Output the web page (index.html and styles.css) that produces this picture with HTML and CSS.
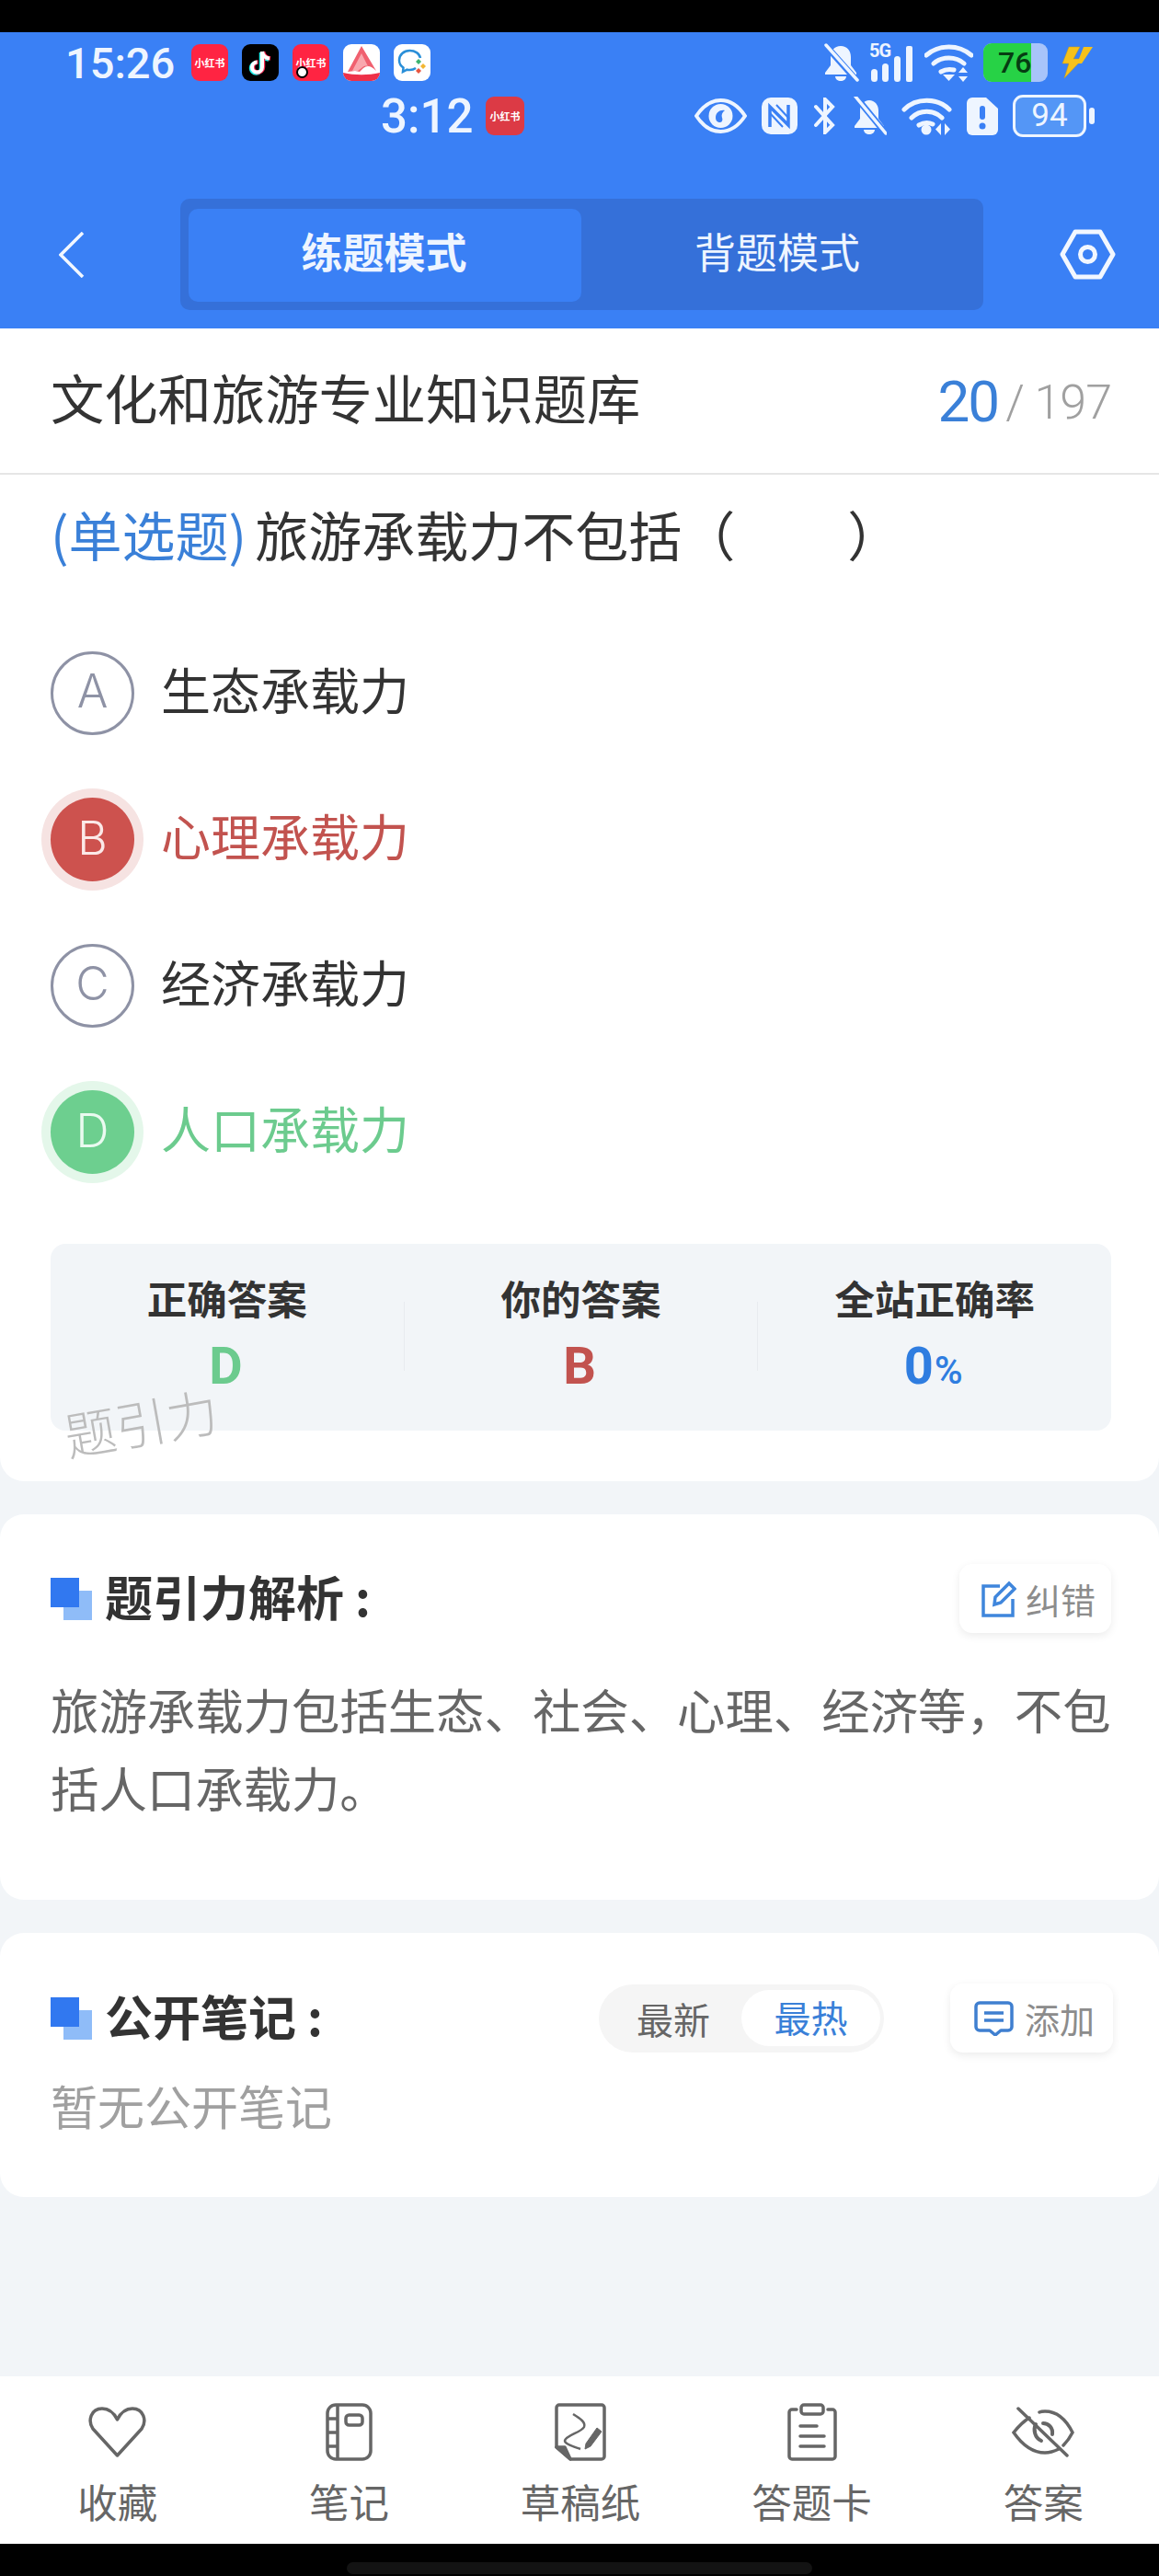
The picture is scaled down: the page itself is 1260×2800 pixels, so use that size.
FILE: index.html
```html
<!DOCTYPE html>
<html lang="zh-CN">
<head>
<meta charset="UTF-8" />
<title>文化和旅游专业知识题库</title>
<link rel="stylesheet" href="styles.css">
</head>
<body>
  <div class="page">
    <div class="black-top"></div>

    <header class="header">
      <div class="status-row status-one">
        <span class="time time-one">15:26</span>
        <div class="app-icons">
          <span class="app app-red">小红书</span>
          <span class="app app-black">
            <svg viewBox="0 0 40 40" width="40" height="40">
              <path d="M22 8v17a5.5 5.5 0 1 1-5.5-5.5M22 8c.5 4 3.500 7 8 7.500" fill="none" stroke="#25f4ee" stroke-width="4.500" transform="translate(-1 1)"/>
              <path d="M22 8v17a5.5 5.5 0 1 1-5.5-5.5M22 8c.5 4 3.500 7 8 7.500" fill="none" stroke="#fe2c55" stroke-width="4.500" transform="translate(1 0)"/>
              <path d="M22 8v17a5.5 5.5 0 1 1-5.5-5.5M22 8c.5 4 3.500 7 8 7.500" fill="none" stroke="#fff" stroke-width="4"/>
            </svg>
          </span>
          <span class="app app-red app-dot">小红书</span>
          <span class="app app-white">
            <svg viewBox="0 0 40 40" width="40" height="40">
              <path d="M20 2 36 29c-6-6-10-6-14-3l-4 4-5-1-8 1z" fill="#f0606f"/>
              <path d="M20 10 27 24c-3-1-5 0-7 2l-4 3-6 0z" fill="#f9a7ae"/>
              <path d="M0 31c13 3 27 3 40 0v9H0z" fill="#ee3048"/>
            </svg>
          </span>
          <span class="app app-white">
            <svg viewBox="0 0 40 40" width="40" height="40">
              <path d="M24 26c-2 1.500-4 2-6.500 2-1 0-2 0-3-.3L10 30l.5-4.500C7.500 23.500 6 20.500 6 17.500 6 11.500 11 7 17.500 7 23 7 28 10 29 15" fill="none" stroke="#2a8fd8" stroke-width="2.500"/>
              <path d="m27 16 3 3-3 3-3-3z" fill="#3cb371"/>
              <path d="m32 21 3 3-3 3-3-3z" fill="#f2b632"/>
              <path d="m27 26 3 3-3 3-3-3z" fill="#e8553f"/>
            </svg>
          </span>
        </div>
        <div class="sys-icons sys-one">
          <svg viewBox="0 0 40 42" width="40" height="42">
            <path d="M20 3c7 0 11 5 11 12v9l6 8v2H3v-2l6-8v-9C9 8 13 3 20 3zM14 36h12c0 3-3 5-6 5s-6-2-6-5z" fill="#eef5ff"/>
            <path d="M5 4 37 40" stroke="#3a80f5" stroke-width="7"/>
            <path d="M4 2 38 40" stroke="#eef5ff" stroke-width="3.500" stroke-linecap="round"/>
          </svg>
          <span class="signal">
            <span class="five-g">5G</span>
            <svg viewBox="0 0 49 42" width="49" height="42">
              <rect x="2" y="28" width="7" height="14" rx="3.500" fill="#eef5ff"/>
              <rect x="14" y="22" width="7" height="20" rx="3.500" fill="#eef5ff"/>
              <rect x="27" y="14" width="7" height="28" rx="3.500" fill="#eef5ff"/>
              <rect x="40" y="3" width="7" height="39" rx="2" fill="#eef5ff"/>
            </svg>
          </span>
          <svg viewBox="0 0 53 42" width="53" height="42" fill="none" stroke="#eef5ff" stroke-width="5" stroke-linecap="round">
            <path d="M2 13C16 1 37 1 51 13"/>
            <path d="M10 22c9-8 24-8 33 0"/>
            <path d="M18 31c5-3 10-3 14-2"/>
            <path d="M20 34h13l-6.500 7z" fill="#eef5ff" stroke="none"/>
            <path d="m42 26 5 6H37zM42 42l5-6H37z" fill="#eef5ff" stroke="none"/>
          </svg>
          <span class="batt-green">
            <span class="batt-green-fill">76</span>
          </span>
          <svg viewBox="0 0 35 36" width="35" height="36">
            <path d="M8 1h12L13 14h10L3 35l5-16H1z" fill="#f7c11a" stroke="#c99a10" stroke-width=".5"/>
            <path d="M24 1h10L22 19h-5z" fill="#f7c11a"/>
          </svg>
        </div>
      </div>

      <div class="status-row status-two">
        <span class="time time-two">3:12</span>
        <span class="app app-dim">小红书</span>
        <div class="sys-icons sys-two">
          <svg viewBox="0 0 57 38" width="57" height="38">
            <path d="M2 19C10 7 19 2 28.500 2S47 7 55 19C47 31 38 36 28.500 36S10 31 2 19z" fill="none" stroke="#eef5ff" stroke-width="4"/>
            <circle cx="28.500" cy="19" r="13" fill="#eef5ff"/>
            <path d="M23 21c0-6 5-9 10-8-3 2-4 5-3 8 1 2 0 5-2 5-3 0-5-2-5-5z" fill="#3a80f5"/>
          </svg>
          <svg viewBox="0 0 39 40" width="39" height="40">
            <rect x="0" y="0" width="39" height="40" rx="10" fill="#eef5ff"/>
            <path d="M9 32V10l20 20V8" fill="none" stroke="#3a80f5" stroke-width="3.500"/>
            <path d="M16 8l14 15M9 17l14 15" stroke="#3a80f5" stroke-width="2"/>
          </svg>
          <svg viewBox="0 0 27 40" width="27" height="40" fill="none" stroke="#eef5ff" stroke-width="4" stroke-linecap="round">
            <path d="M4 10 22 30l-8 8V2l8 8L4 30"/>
          </svg>
          <svg viewBox="0 0 38 42" width="38" height="42">
            <path d="M19 4c6 0 10 5 10 11v9l6 8v2H3v-2l6-8v-9C9 9 13 4 19 4zM13 36h12c0 3-3 5-6 5s-6-2-6-5z" fill="#eef5ff"/>
            <path d="M5 1 37 40" stroke="#3a80f5" stroke-width="7"/>
            <path d="M4 0 37 40" stroke="#eef5ff" stroke-width="3.500" stroke-linecap="round"/>
          </svg>
          <svg viewBox="0 0 55 42" width="55" height="42" fill="none" stroke="#eef5ff" stroke-width="5" stroke-linecap="round">
            <path d="M3 14C16 1 39 1 52 14"/>
            <path d="M11 23c9-9 24-9 33 0"/>
            <path d="M19 31c5-3 11-3 15-1"/>
            <circle cx="27" cy="36" r="5.500" fill="#eef5ff" stroke="none"/>
            <path d="M43 29v13l-6-6.500zM47 29v13l6-6.500z" fill="#eef5ff" stroke="none"/>
          </svg>
          <svg viewBox="0 0 34 41" width="34" height="41">
            <path d="M6 0h15l13 12v23a6 6 0 0 1-6 6H6a6 6 0 0 1-6-6V6a6 6 0 0 1 6-6z" fill="#eef5ff"/>
            <rect x="14" y="9" width="6" height="15" rx="3" fill="#3a80f5"/>
            <circle cx="17" cy="31" r="3.500" fill="#3a80f5"/>
          </svg>
          <span class="batt-outline"><b>94</b></span>
          <span class="batt-nub"></span>
        </div>
      </div>

      <div class="nav-row">
        <svg class="back" viewBox="0 0 28 50" width="28" height="50" fill="none" stroke="#f2f7ff" stroke-width="3.500">
          <path d="M26 1 2 25l24 24"/>
        </svg>
        <div class="mode-tabs">
          <span class="mode-tab mode-active">练题模式</span>
          <span class="mode-tab">背题模式</span>
        </div>
        <svg class="gear" viewBox="0 0 61 55" width="61" height="55" fill="none" stroke="#f2f7ff" stroke-width="5" stroke-linejoin="round">
          <path d="M17 3h27l14 24.500L44 52H17L3 27.500z"/>
          <circle cx="30.500" cy="27.500" r="8"/>
        </svg>
      </div>
    </header>

    <main class="main">
      <section class="panel">
        <div class="title-row">
          <div class="title">文化和旅游专业知识题库</div>
          <div class="count"><span class="count-now">20</span><span class="count-all">/ 197</span></div>
        </div>

        <div class="question"><span class="q-type">(单选题)</span>旅游承载力不包括（<span class="q-gap"></span>）</div>

        <ul class="options">
          <li class="option"><span class="bullet">A</span><span class="opt-text">生态承载力</span></li>
          <li class="option option-wrong"><span class="bullet">B</span><span class="opt-text">心理承载力</span></li>
          <li class="option"><span class="bullet">C</span><span class="opt-text">经济承载力</span></li>
          <li class="option option-right"><span class="bullet">D</span><span class="opt-text">人口承载力</span></li>
        </ul>

        <div class="stats">
          <div class="stat">
            <div class="stat-label">正确答案</div>
            <div class="stat-value val-green">D</div>
          </div>
          <i class="stat-line"></i>
          <div class="stat">
            <div class="stat-label">你的答案</div>
            <div class="stat-value val-red">B</div>
          </div>
          <i class="stat-line"></i>
          <div class="stat">
            <div class="stat-label">全站正确率</div>
            <div class="stat-value val-blue">0<small>%</small></div>
          </div>
        </div>
        <div class="watermark">题引力</div>
      </section>

      <section class="card card-analysis">
        <div class="card-head">
          <svg class="head-mark" viewBox="0 0 45 46" width="45" height="46">
            <rect x="14" y="14" width="31" height="32" fill="#8fbcf8"/>
            <rect x="0" y="0" width="31" height="32" fill="#3178f0"/>
          </svg>
          <h2 class="head-title">题引力解析<span class="colon">:</span></h2>
          <span class="mini-btn btn-fix">
            <svg viewBox="0 0 38 40" width="38" height="40" fill="none" stroke="#3f86dc" stroke-width="3.500">
              <path d="M20 6H2v32h32V20"/>
              <path d="M14 26l1-8L30 3l6 6-15 15z"/>
            </svg>
            纠错
          </span>
        </div>
        <p class="analysis-text">旅游承载力包括生态、社会、心理、经济等，不包括人口承载力。</p>
      </section>

      <section class="card card-notes">
        <div class="card-head">
          <svg class="head-mark" viewBox="0 0 45 46" width="45" height="46">
            <rect x="14" y="14" width="31" height="32" fill="#8fbcf8"/>
            <rect x="0" y="0" width="31" height="32" fill="#3178f0"/>
          </svg>
          <h2 class="head-title">公开笔记<span class="colon">:</span></h2>
          <div class="sort-tabs">
            <span class="sort-tab">最新</span>
            <span class="sort-tab sort-active">最热</span>
          </div>
          <span class="mini-btn btn-add">
            <svg viewBox="0 0 43 38" width="43" height="38" fill="none" stroke="#3f7fd0" stroke-width="3.500" stroke-linejoin="round">
              <path d="M6 2h31a4 4 0 0 1 4 4v22a4 4 0 0 1-4 4h-8l-6 5-6-5H6a4 4 0 0 1-4-4V6a4 4 0 0 1 4-4z"/>
              <path d="M11 13h21M11 21h21"/>
            </svg>
            添加
          </span>
        </div>
        <p class="notes-empty">暂无公开笔记</p>
      </section>
    </main>

    <nav class="bottom-bar">
      <div class="bar-item">
        <span class="bar-icon">
          <svg viewBox="0 0 63 55" width="63" height="55" fill="none" stroke="#666" stroke-width="3.500" stroke-linejoin="round">
            <path d="M31.500 53 5 24C-1 15 3 2 15 2c8 0 13 5 16.500 12C35 7 40 2 48 2c12 0 16 13 10 22z"/>
          </svg>
        </span>
        <span class="bar-label">收藏</span>
      </div>
      <div class="bar-item">
        <span class="bar-icon">
          <svg viewBox="0 0 51 63" width="51" height="63" fill="none" stroke="#666" stroke-width="3.500">
            <rect x="2" y="2" width="47" height="59" rx="9"/>
            <path d="M13 2v59M2 17h11M2 32h11M2 47h11"/>
            <rect x="22" y="13" width="18" height="11" rx="3.500"/>
          </svg>
        </span>
        <span class="bar-label">笔记</span>
      </div>
      <div class="bar-item">
        <span class="bar-icon">
          <svg viewBox="0 0 56 63" width="56" height="63" fill="none" stroke="#666" stroke-width="3.500" stroke-linejoin="round">
            <path d="M2 48V5a3 3 0 0 1 3-3h46a3 3 0 0 1 3 3v53a3 3 0 0 1-3 3H17z"/>
            <path d="M2 48h9l6 13z" fill="#666"/>
            <path d="M20 12c8 5 14 9 12 14-3 6-20 9-21 15 0 4 12 7 17 9" stroke-width="2.500"/>
            <path d="m34 44 12-17 5 4-12 16-6 3z" fill="#666" stroke-width="1"/>
          </svg>
        </span>
        <span class="bar-label">草稿纸</span>
      </div>
      <div class="bar-item">
        <span class="bar-icon">
          <svg viewBox="0 0 54 63" width="54" height="63" fill="none" stroke="#666" stroke-width="3.500" stroke-linecap="round">
            <path d="M10 7H5a3 3 0 0 0-3 3v48a3 3 0 0 0 3 3h44a3 3 0 0 0 3-3V10a3 3 0 0 0-3-3h-5"/>
            <rect x="15" y="2" width="24" height="10" rx="3"/>
            <path d="M14 25h18M14 36h26M14 47h26"/>
          </svg>
        </span>
        <span class="bar-label">答题卡</span>
      </div>
      <div class="bar-item">
        <span class="bar-icon">
          <svg viewBox="0 0 68 55" width="68" height="55" fill="none" stroke="#666" stroke-width="3.500" stroke-linecap="round">
            <path d="M19 12C11 17 6 23 2 28c9 13 20 22 34 22 6 0 11-2 15-4M30 6c2-1 4-1 6-1 13 0 23 9 30 23-3 6-6 10-10 14"/>
            <path d="M7 2 60 53"/>
            <path d="M26 19c-3 6-1 15 6 18M34 18c6 0 11 5 10 12" stroke-width="4"/>
          </svg>
        </span>
        <span class="bar-label">答案</span>
      </div>
    </nav>

    <div class="black-bottom"><span class="home-pill"></span></div>
  </div>
</body>
</html>
```

FILE: styles.css
```css
/* Reset and base */
* {
  box-sizing: border-box;
}
body {
  margin: 0;
  font-family: "Noto Sans CJK SC", "Noto Sans", sans-serif;
  color: #333;
}
h2, p, ul {
  margin: 0;
  padding: 0;
}
svg {
  display: block;
  flex: none;
}
.page {
  width: 1260px;
  height: 2800px;
  display: flex;
  flex-direction: column;
  background: #f2f5f8;
}
.black-top {
  height: 35px;
  background: #000;
}

/* Blue header */
.header {
  height: 322px;
  background: #3a80f5;
  padding-top: 12px;
}
.status-row {
  display: flex;
  align-items: center;
  height: 42px;
}
.status-one {
  padding: 0 71px;
}
.status-two {
  margin-top: 16px;
  padding: 0 70px 0 414px;
}
.time {
  font-family: Roboto, sans-serif;
  font-weight: 500;
  color: #eef5ff;
}
.time-one {
  width: 137px;
  font-size: 47px;
}
.time-two {
  width: 114px;
  font-size: 51px;
}
.app-icons {
  display: flex;
  gap: 15px;
}
.app {
  width: 40px;
  height: 40px;
  border-radius: 9px;
  display: flex;
  align-items: center;
  justify-content: center;
  overflow: hidden;
  font-size: 11px;
  font-weight: 700;
  white-space: nowrap;
  color: #fff;
}
.app-red {
  background: #ff2442;
}
.app-black {
  background: #000;
}
.app-white {
  background: #fff;
}
.app-dot {
  position: relative;
}
.app-dot::after {
  content: "";
  position: absolute;
  left: 4px;
  bottom: 3px;
  width: 9px;
  height: 9px;
  border-radius: 50%;
  border: 2px solid #000;
  background: #fff;
}
.app-dim {
  width: 42px;
  height: 42px;
  background: #dc3a45;
}
.sys-icons {
  display: flex;
  align-items: center;
  margin-left: auto;
}
.sys-one {
  gap: 11px;
}
.sys-two {
  gap: 16px;
}
.signal {
  position: relative;
  display: block;
  width: 49px;
  height: 42px;
}
.five-g {
  position: absolute;
  left: 0;
  top: -2px;
  font-family: Roboto, sans-serif;
  font-size: 20px;
  font-weight: 700;
  letter-spacing: -1px;
  line-height: 20px;
  color: #eef5ff;
}
.batt-green {
  position: relative;
  width: 70px;
  height: 42px;
  border-radius: 9px;
  background: #a8c4fa;
  overflow: hidden;
  margin-right: 4px;
}
.batt-green-fill {
  display: block;
  width: 52px;
  height: 42px;
  background: #27d246;
  padding-left: 16px;
  font-family: Roboto, sans-serif;
  font-size: 32px;
  font-weight: 500;
  line-height: 42px;
  color: #063d12;
}
.batt-outline {
  width: 80px;
  height: 46px;
  border: 3px solid #eef5ff;
  border-radius: 11px;
  background: #5496f6;
  text-align: center;
  font-family: Roboto, sans-serif;
  font-size: 35px;
  line-height: 39px;
  color: #eef5ff;
}
.batt-outline b {
  font-weight: 400;
}
.batt-nub {
  width: 6px;
  height: 18px;
  margin-left: -13px;
  border-radius: 3px;
  background: #eef5ff;
}

/* Nav and mode tabs */
.nav-row {
  display: flex;
  align-items: center;
  margin-top: 69px;
  padding-left: 64px;
}
.back {
  margin-right: 104px;
}
.gear {
  margin-left: 83px;
}
.mode-tabs {
  display: flex;
  width: 873px;
  height: 121px;
  padding: 11px 9px 9px;
  border-radius: 10px;
  background: #3570d9;
}
.mode-tab {
  flex: 1;
  padding-right: 2px;
  font-size: 45px;
  line-height: 92px;
  text-align: center;
  color: #eef5ff;
}
.mode-active {
  flex: none;
  width: 427px;
  border-radius: 10px;
  background: #3a80f5;
  font-weight: 700;
}

/* Question panel */
.main {
  flex: 1;
}
.panel {
  position: relative;
  height: 1253px;
  padding: 0 52px 0 55px;
  border-radius: 0 0 26px 26px;
  background: #fff;
}
.title-row {
  display: flex;
  align-items: center;
  justify-content: space-between;
  height: 159px;
  margin: 0 -52px 0 -55px;
  padding: 0 52px 6px 55px;
  border-bottom: 2px solid #e6e6e6;
}
.title {
  margin-bottom: 3px;
  font-size: 58.300px;
  line-height: 80px;
}
.count {
  margin-top: 8px;
  font-family: Roboto, sans-serif;
  white-space: nowrap;
  color: #a0a0a0;
}
.count-now {
  margin-right: 8px;
  font-size: 62px;
  letter-spacing: -2px;
  color: #3a80d8;
}
.count-all {
  font-size: 52px;
  font-weight: 300;
  letter-spacing: -1px;
  vertical-align: 3px;
}
.question {
  margin-top: 19px;
  font-size: 58px;
  line-height: 90px;
}
.q-type {
  margin-right: 9px;
  color: #3a80d8;
}
.q-gap {
  display: inline-block;
  width: 122px;
}
.options {
  list-style: none;
  margin-top: 49px;
}
.option {
  display: flex;
  align-items: center;
  gap: 29px;
  height: 159px;
  font-size: 54px;
}
.opt-text {
  margin-bottom: 10px;
}
.bullet {
  width: 91px;
  height: 91px;
  border: 3px solid #8e92a5;
  border-radius: 50%;
  text-align: center;
  font-family: Inter, sans-serif;
  font-size: 50px;
  font-weight: 300;
  line-height: 81px;
  color: #8e92a5;
}
.option-wrong {
  color: #c2534f;
}
.option-wrong .bullet {
  border: 0;
  background: #cd524e;
  box-shadow: 0 0 0 10px #f6e3e2;
  line-height: 88px;
  color: #fbe9e8;
}
.option-right {
  color: #6ccb8e;
}
.option-right .bullet {
  border: 0;
  background: #6dcf8f;
  box-shadow: 0 0 0 10px #e4f7ea;
  line-height: 88px;
  color: #eafaf0;
}
.stats {
  display: flex;
  align-items: flex-start;
  height: 203px;
  margin-top: 42px;
  padding-top: 29px;
  border-radius: 16px;
  background: #f2f5f8;
}
.stat {
  flex: 1;
  text-align: center;
}
.stat-line {
  flex: none;
  width: 1px;
  height: 75px;
  margin-top: 34px;
  background: #e8ebef;
}
.stat-label {
  font-size: 43.500px;
  font-weight: 700;
  line-height: 60px;
}
.stat-value {
  margin-top: 9px;
  padding-right: 3px;
  font-family: Roboto, sans-serif;
  font-size: 56px;
  font-weight: 700;
  line-height: 70px;
}
.stat-value small {
  margin-left: 1px;
  font-size: 42px;
  font-weight: 500;
}
.val-green {
  color: #6ccb8e;
}
.val-red {
  color: #c2534f;
}
.val-blue {
  color: #2f7de0;
}
.watermark {
  position: absolute;
  left: 69px;
  top: 1153px;
  font-size: 56px;
  font-weight: 300;
  line-height: 70px;
  color: #bcbcbc;
  transform: rotate(-10deg);
}

/* Cards */
.card {
  margin-top: 36px;
  padding: 0 50px 0 55px;
  border-radius: 26px;
  background: #fff;
}
.card-analysis {
  height: 419px;
  padding-top: 54px;
}
.card-notes {
  height: 287px;
  padding-top: 55px;
}
.card-head {
  display: flex;
  align-items: center;
  height: 75px;
}
.head-title {
  margin-left: 14px;
  margin-bottom: 6px;
  font-size: 52px;
  font-weight: 700;
  line-height: 70px;
}
.colon {
  margin-left: 12px;
}
.mini-btn {
  display: flex;
  align-items: center;
  height: 75px;
  border-radius: 14px;
  background: #fff;
  box-shadow: 0 3px 10px rgba(0,0,0,0.08);
  font-size: 38px;
  line-height: 70px;
  white-space: nowrap;
  color: #8c8c8c;
}
.btn-fix {
  gap: 10px;
  width: 165px;
  margin-left: auto;
  margin-right: 2px;
  padding-left: 24px;
}
.btn-add {
  gap: 12px;
  width: 177px;
  padding-left: 26px;
}
.analysis-text {
  width: 1153px;
  margin-top: 40px;
  font-size: 52.400px;
  line-height: 85px;
  color: #666;
}
.sort-tabs {
  display: flex;
  align-items: center;
  width: 310px;
  height: 74px;
  margin-left: auto;
  margin-right: 72px;
  padding: 0 4px 0 7px;
  border-radius: 37px;
  background: #f5f5f5;
  font-size: 40px;
  line-height: 58px;
  color: #666;
}
.sort-tab {
  flex: 1;
  text-align: center;
}
.sort-active {
  flex: none;
  width: 151px;
  border-radius: 31px;
  background: #fff;
  color: #3a80d8;
  padding-bottom: 3px;
}
.notes-empty {
  margin-top: 22px;
  font-size: 51px;
  line-height: 70px;
  color: #a0a0a0;
}

/* Bottom bar */
.bottom-bar {
  display: flex;
  height: 182px;
  background: #fff;
}
.bar-item {
  flex: 1;
  display: flex;
  flex-direction: column;
  align-items: center;
  padding-top: 28px;
}
.bar-item:first-child {
  padding-left: 2px;
}
.bar-icon {
  display: flex;
  align-items: center;
  height: 64px;
}
.bar-label {
  margin-top: 14px;
  font-size: 43.500px;
  line-height: 60px;
  color: #666;
}
.black-bottom {
  height: 35px;
  padding-top: 20px;
  background: #000;
}
.home-pill {
  display: block;
  width: 506px;
  height: 13px;
  margin: 0 auto;
  border-radius: 7px;
  background: #131313;
}
```
